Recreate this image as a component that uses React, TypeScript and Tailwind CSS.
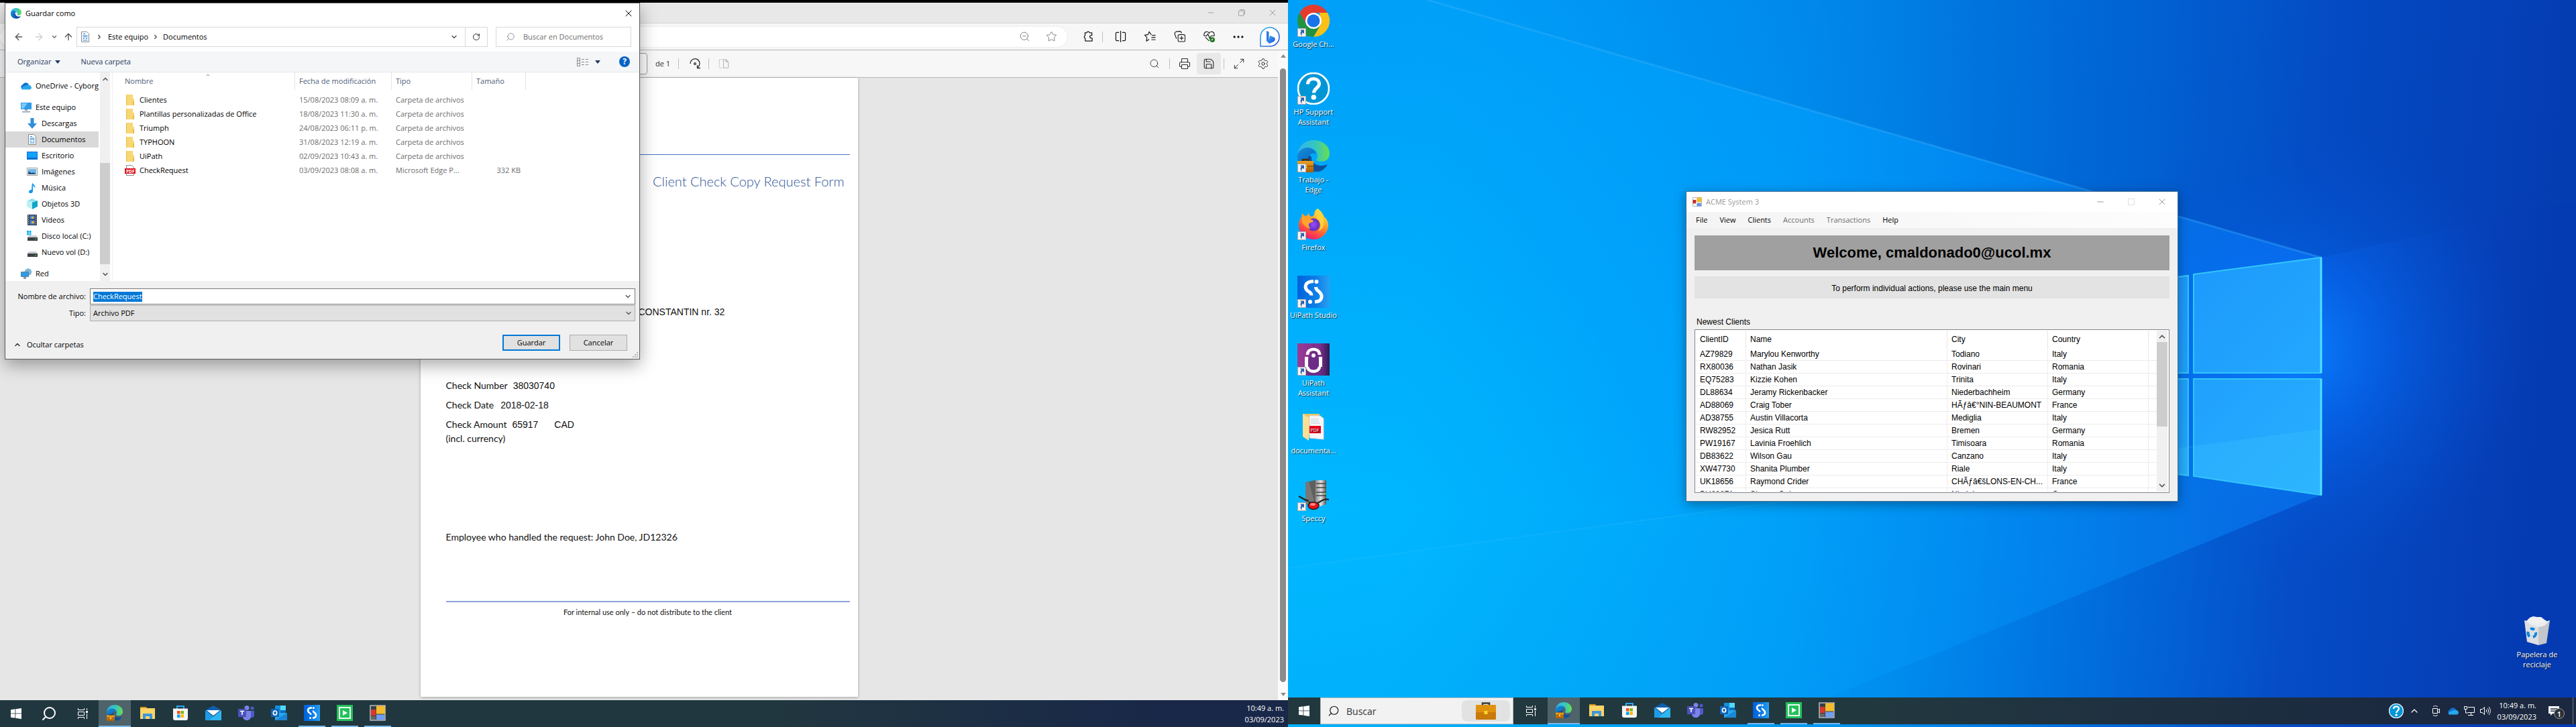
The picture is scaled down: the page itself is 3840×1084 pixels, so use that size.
import React from "react";
import {
  ArrowLeft, ArrowRight, ArrowUp, ChevronDown, ChevronRight, ChevronUp, Columns2, Ellipsis, Maximize2,
  Minus, Printer, RotateCw, Save, Search, Settings, Star, X, ZoomOut,
} from "lucide-react";

type P = { className?: string };
const UI = "font-['Open_Sans','Noto_Sans',sans-serif]";

/* ---------- App icons ---------- */

function EdgeLogo({ className = "", work = false }: P & { work?: boolean }) {
  return (
    <svg viewBox="0 0 48 48" className={className} aria-hidden="true">
      <defs>
        <linearGradient id="eg1" x1="0" y1="0.4" x2="1" y2="0.4">
          <stop offset="0" stopColor="#2fb4ee" /><stop offset="0.55" stopColor="#35c6c0" /><stop offset="1" stopColor="#66e04c" />
        </linearGradient>
        <linearGradient id="eg2" x1="0" y1="0" x2="0.6" y2="1">
          <stop offset="0" stopColor="#1590df" /><stop offset="1" stopColor="#0a5cb0" />
        </linearGradient>
        <linearGradient id="eg3" x1="0" y1="0" x2="0" y2="1">
          <stop offset="0" stopColor="#f2a11b" /><stop offset="1" stopColor="#a65a06" />
        </linearGradient>
      </defs>
      <path fill="#0f4f9c" d="M15 20c-4 10 2 26 15 27 6 0 12-5 15-11-2 1-6 2-10 2-8 0-15-6-14-13z" />
      <path fill="url(#eg2)" d="M0 24c0-9 8-14 15-13 8 1 13 6 12 10-3-3-8-1-10 3-3 7 2 18 11 23C12 49 0 39 0 24z" />
      <path fill="url(#eg1)" d="M0 22C1 9 11 0 24 0c14 0 24 9 24 20 0 8-6 12-12 12-5 0-8-1-8-3 0-1 2-2 2-6 0-6-6-12-14-12C8 11 2 15 0 22z" />
      {work && (
        <g>
          <path d="M8 33v-4h8v4" fill="none" stroke="#4a2c0c" strokeWidth="2.5" />
          <rect x="0" y="31" width="24" height="17" fill="url(#eg3)" />
          <rect x="0" y="38" width="24" height="2" fill="#a05a08" />
          <rect x="10" y="37" width="4" height="5" fill="#ffd23e" />
        </g>
      )}
    </svg>
  );
}

function ChromeLogo({ className = "" }: P) {
  return (
    <svg viewBox="0 0 48 48" className={className} aria-hidden="true">
      <path fill="#e33b2e" d="M3.2 12A24 24 0 0 1 44.8 12H24L14 30z" />
      <path fill="#fbc116" d="M44.8 12A24 24 0 0 1 24 48l10.400-18L33 12z" />
      <path fill="#229342" d="M3.200 12A24 24 0 0 0 24 48l10.400-18H13.600z" />
      <circle cx="24" cy="24" r="12" fill="#fff" />
      <circle cx="24" cy="24" r="9.500" fill="#1a73e8" />
    </svg>
  );
}

function HelpLogo({ className = "" }: P) {
  return (
    <svg viewBox="0 0 48 48" className={className} aria-hidden="true">
      <circle cx="24" cy="24" r="23" fill="#0096d6" stroke="#fff" strokeWidth="2.600" />
      <path d="M15.500 17.500c0-5 3.500-8 8.500-8s8.500 3 8.500 7.500c0 6-8 7-8 13.500" fill="none" stroke="#fff" strokeWidth="5" />
      <circle cx="24.300" cy="37" r="3.800" fill="#fff" />
    </svg>
  );
}

function FirefoxLogo({ className = "" }: P) {
  return (
    <svg viewBox="0 0 48 48" className={className} aria-hidden="true">
      <defs>
        <linearGradient id="ff1" x1="0.8" y1="0" x2="0.3" y2="1">
          <stop offset="0" stopColor="#fff04a" /><stop offset="0.45" stopColor="#ff9a2a" /><stop offset="0.8" stopColor="#ff3f4a" /><stop offset="1" stopColor="#e01586" />
        </linearGradient>
        <radialGradient id="ff2"><stop offset="0" stopColor="#9b4dff" /><stop offset="1" stopColor="#5a2fb8" /></radialGradient>
      </defs>
      <path fill="url(#ff1)" d="M30 1c5 3 9 9 9.500 12 3 2 7 7 6.500 14-1 12-11 20-22 20S1.500 38 2 25c0-4 1-8 4-11l1-6 4 4 4-1 2-4c0 3 1 5 3 6 3 0 4-1 5-3 0-4 2-7 5-9z" />
      <circle cx="24" cy="25" r="9.500" fill="url(#ff2)" />
      <path fill="#ffa52c" d="M7 13c5 0 7 3 10 4 3 0 6 0 7 3-3 2-6 2-7 4-1 3 2 5 2 7-6-1-9-6-12-9z" />
      <path fill="#ffd23a" d="M30 3c5 4 9 11 9 16 2 8-3 14-8 16 6-7 4-14-1-18-3-4-4-9 0-14z" />
    </svg>
  );
}

function StudioLogo({ className = "" }: P) {
  return (
    <svg viewBox="0 0 48 48" className={className} aria-hidden="true">
      <defs><linearGradient id="us" x1="0" x2="1"><stop offset="0" stopColor="#0062dc" /><stop offset="0.6" stopColor="#0f7fe8" /><stop offset="1" stopColor="#27a0f2" /></linearGradient></defs>
      <rect width="48" height="48" fill="url(#us)" />
      <path d="M24 8.500c-13 0-14 9-9 14 3 2 6 3 6 7" fill="none" stroke="#fff" strokeWidth="5" />
      <path d="M26 39c12 0 12-10 6.500-15C30 22 27.500 21 27.500 17" fill="none" stroke="#fff" strokeWidth="5" />
      <circle cx="28.500" cy="9" r="3" fill="#fff" /><circle cx="19" cy="39" r="3" fill="#fff" />
    </svg>
  );
}

function AssistantLogo({ className = "" }: P) {
  return (
    <svg viewBox="0 0 48 48" className={className} aria-hidden="true">
      <defs><linearGradient id="ua" x1="0" x2="1"><stop offset="0" stopColor="#9a3a98" /><stop offset="0.7" stopColor="#7d2f8c" /><stop offset="1" stopColor="#2b1a55" /></linearGradient></defs>
      <rect width="48" height="48" fill="url(#ua)" />
      <path d="M24 0l15 48H10z" fill="#5a2a80" opacity=".6" />
      <path d="M15 17c0-11 18-11 18 0M15 35c1 9 17 9 18 0" fill="none" stroke="#fff" strokeWidth="4.500" />
      <path d="M13.500 20v15M34.500 20v15" stroke="#fff" strokeWidth="5" />
      <circle cx="24" cy="18" r="3" fill="#fff" />
    </svg>
  );
}

function DocsFolderLogo({ className = "" }: P) {
  return (
    <svg viewBox="0 0 48 48" className={className} aria-hidden="true">
      <path fill="#e9c56a" d="M8 4h25v32H8z" /><path fill="#f7f7f7" stroke="#d8d8d8" d="M18 7h16l5 4v31l-21-2z" />
      <path d="M20 12h12M20 15h12M20 18h14" stroke="#b8cbe0" />
      <rect x="18" y="22" width="17" height="11" fill="#e2001a" />
      <text x="19.500" y="30.500" fontSize="7" fill="#fff" fontFamily="Open Sans">PDF</text>
      <path fill="#fbe093" d="M8 4l9 6v34l-9-6z" />
    </svg>
  );
}

function SpeccyLogo({ className = "" }: P) {
  return (
    <svg viewBox="0 0 48 48" className={className} aria-hidden="true">
      <defs><linearGradient id="sp" x1="0" x2="1"><stop offset="0" stopColor="#8a8a8a" /><stop offset="0.5" stopColor="#e4e4e4" /><stop offset="1" stopColor="#555" /></linearGradient></defs>
      <path fill="#777" d="M12 5l15-3v40l-15-5z" /><path fill="#3c3c3c" d="M17 4l10-2v38z" opacity=".4" />
      <path fill="url(#sp)" d="M27 2h16v36l-16 5z" />
      <path d="M28 7h15M28 13h15M28 20h15M28 25h15" stroke="#444" strokeWidth="1.500" /><circle cx="41" cy="22" r="1.300" fill="#4f3" />
      <path d="M2 26c5 2 8 6 15 7M30 36c6-3 10-7 17-5M17 35l6 1" fill="none" stroke="#222" strokeWidth="2.200" />
      <ellipse cx="24" cy="40" rx="8" ry="5.500" fill="#e8121c" stroke="#222" strokeWidth="1.500" />
      <ellipse cx="23" cy="38" rx="4" ry="2" fill="#ff8a86" />
    </svg>
  );
}

function RecycleBin({ className = "" }: P) {
  return (
    <svg viewBox="0 0 48 48" className={className} aria-hidden="true">
      <path fill="#f1f1f1" d="M8 9l5-5 5-2 6 1 6 0 5 4 5 3-12 5-15-2z" />
      <path fill="#dcdfe4" d="M5 8l4 32 17 5V14z" /><path fill="#c3c6cb" d="M26 14l17-6-5 34-12 3z" />
      <path fill="#eceef1" d="M5 8l21 6 17-6-8 8-9 2-12-4z" />
      <path d="M14 21a6 6 0 0 1 6 1M11 25a6 6 0 0 0 2 7M22 26a6 6 0 0 1-4 7" fill="none" stroke="#0a84dc" strokeWidth="4" />
    </svg>
  );
}

function WinLogo({ className = "" }: P) {
  return (
    <svg viewBox="0 0 16 16" className={className} fill="#fff" aria-hidden="true">
      <path d="M0 2.200l6.500-.9v6.200H0zM7.300 1.200L16 0v7.500H7.300zM0 8.300h6.500v6.300L0 13.700zM7.300 8.300H16V16l-8.700-1.200z" />
    </svg>
  );
}

function TaskViewIcon({ className = "" }: P) {
  return (
    <svg viewBox="0 0 16 16" className={className} fill="none" stroke="#fff" aria-hidden="true">
      <path d="M1.500 0v2.500h9V0M1.500 5.500h9v5h-9zM1.500 16v-2.500h9V16M14.500 0v3M14.500 8v8" /><path d="M13.500 4.500h2v2h-2z" fill="#fff" />
    </svg>
  );
}

function ExplorerIcon({ className = "" }: P) {
  return (
    <svg viewBox="0 0 24 24" className={className} aria-hidden="true">
      <path fill="#d99a16" d="M1 3h9l2 3H1z" /><path fill="#fcd468" d="M1 5h22v16H1z" /><path fill="#3f96dc" d="M5 13h14v8h-4v-4H9v4H5z" />
    </svg>
  );
}
function StoreIcon({ className = "" }: P) {
  return (
    <svg viewBox="0 0 24 24" className={className} aria-hidden="true">
      <path d="M7 6V2h10v4" fill="none" stroke="#29a8ea" strokeWidth="2" /><path fill="#f5f5f5" d="M1 5.500h22V20a3 3 0 0 1-3 3H4a3 3 0 0 1-3-3z" />
      <path fill="#f25022" d="M7 9h4.500v4.500H7z" /><path fill="#7fba00" d="M12.500 9H17v4.500h-4.500z" /><path fill="#00a4ef" d="M7 14.500h4.500V19H7z" /><path fill="#ffb900" d="M12.500 14.500H17V19h-4.500z" />
    </svg>
  );
}
function MailIcon({ className = "" }: P) {
  return (
    <svg viewBox="0 0 24 24" className={className} aria-hidden="true">
      <path fill="#0f5fae" d="M0 8l12-7 12 7v6H0z" /><path fill="#fff" d="M2 8h20l-10 8z" /><path fill="#1e9be6" d="M0 8l12 9L24 8v15H0z" /><path fill="#35c0f4" d="M24 8v15H6z" opacity=".7" />
    </svg>
  );
}
function TeamsIcon({ className = "" }: P) {
  return (
    <svg viewBox="0 0 24 24" className={className} aria-hidden="true">
      <circle cx="13" cy="4.500" r="3.500" fill="#7b83eb" /><circle cx="21" cy="5" r="2.500" fill="#5059c9" />
      <path fill="#5059c9" d="M17 9h7v7c0 3-5 4-7 2z" /><path fill="#7b83eb" d="M7 9h12v8c0 8-12 8-12 0z" /><rect y="6" width="12" height="12" fill="#4b53bc" />
      <path d="M3 9.500h6M6 9.500V15" stroke="#fff" strokeWidth="1.600" />
    </svg>
  );
}
function OutlookIcon({ className = "" }: P) {
  return (
    <svg viewBox="0 0 24 24" className={className} aria-hidden="true">
      <rect x="6" y="1" width="16" height="14" fill="#1490df" /><rect x="14" y="1" width="8" height="7" fill="#50d9ff" /><rect x="14" y="8" width="8" height="6" fill="#0f6cbd" />
      <path fill="#28a8ea" d="M6 12h18v11H6z" /><path fill="#1b86d6" d="M6 23l18-11v11z" /><rect y="6" width="12" height="12" fill="#0f64b8" />
      <ellipse cx="6" cy="12" rx="2.600" ry="3" fill="none" stroke="#fff" strokeWidth="1.700" />
    </svg>
  );
}
function RobotRunIcon({ className = "" }: P) {
  return (
    <svg viewBox="0 0 24 24" className={className} aria-hidden="true">
      <rect width="24" height="24" fill="#23c05a" /><rect x="4" y="4" width="16" height="16" fill="none" stroke="#fff" strokeWidth="1.800" /><path fill="#fff" d="M9 8l7 4-7 4z" />
    </svg>
  );
}
function FormsIcon({ className = "" }: P) {
  return (
    <svg viewBox="0 0 24 24" className={className} aria-hidden="true">
      <rect x="1" y="1" width="22" height="22" fill="#34414a" stroke="#b8bcc0" strokeWidth="1.500" />
      <rect x="10" y="1.500" width="13" height="12" fill="#f3bc2e" /><rect x="2" y="7" width="7.500" height="9" fill="#d9372b" /><rect x="10" y="14.500" width="12" height="8" fill="#6f9df0" /><rect x="2" y="17" width="7" height="5" fill="#666" />
    </svg>
  );
}
function WinFormIcon({ className = "" }: P) {
  return (
    <svg viewBox="0 0 24 24" className={className} aria-hidden="true">
      <rect x="1" y="1" width="22" height="22" fill="#fff" stroke="#a8acb0" strokeWidth="1.500" />
      <rect x="11" y="1" width="12" height="12" fill="#f3bc2e" /><rect x="1" y="7" width="8" height="9" fill="#c9281e" /><rect x="11" y="15" width="11" height="8" fill="#5f93ea" />
    </svg>
  );
}
function BriefcaseIcon({ className = "" }: P) {
  return (
    <svg viewBox="0 0 30 26" className={className} aria-hidden="true">
      <path d="M10 5V1.500h10V5" fill="none" stroke="#3d3d3d" strokeWidth="2.600" />
      <rect y="4" width="30" height="22" rx="1.500" fill="#c97a08" /><rect y="4" width="30" height="11" rx="1.500" fill="#e0920f" />
      <rect x="12.500" y="13" width="5" height="5" fill="#ffd52e" />
    </svg>
  );
}

/* ---------- Explorer tree icons ---------- */

function DocIcon({ className = "" }: P) {
  return (
    <svg viewBox="0 0 16 16" className={className} aria-hidden="true">
      <path d="M2.500.5h8l3 3v12h-11z" fill="#fff" stroke="#888" /><path d="M5 3.500h3M4.500 6h7M4.500 8h7M9 10.500h2.500M4.500 13h7M4.500 10.500H7" stroke="#1e7fd0" />
    </svg>
  );
}
function CloudIcon({ className = "" }: P) {
  return (
    <svg viewBox="0 0 16 16" className={className} aria-hidden="true">
      <path fill="#0f6fd0" d="M1 12a4 4 0 0 1 2-6 5 5 0 0 1 9 0z" /><path fill="#28a8ea" d="M2 13.500c-2-1-1-4 1-4 3-2 6-3 9-3 5 1 5 7 1 7z" />
    </svg>
  );
}
const PcIcon = ({ className = "" }: P) => (
  <svg viewBox="0 0 16 16" className={className} aria-hidden="true"><path fill="#2f9be8" d="M0 1h16v10H0z" /><path fill="#7cc8f7" d="M1 2h9L4 10H1z" /><path fill="#8b9aa8" d="M6 11h4v2H6zM2 14h12v1.500H2z" /></svg>
);
const DownIcon = ({ className = "" }: P) => (
  <svg viewBox="0 0 16 16" className={className} aria-hidden="true"><path fill="#2f8fdc" d="M5.500 0h5v8H15l-7 8-7-8h4.500z" /></svg>
);
const DeskIcon = ({ className = "" }: P) => (
  <svg viewBox="0 0 16 16" className={className} aria-hidden="true"><path fill="#0b6fd0" d="M0 2h16v12H0z" /><path fill="#12a0fb" d="M1 3h14v8H1z" /></svg>
);
const PicIcon = ({ className = "" }: P) => (
  <svg viewBox="0 0 16 16" className={className} aria-hidden="true"><path fill="#fff" stroke="#999" d="M.5 2.500h15v11H.5z" /><path fill="#6db8ea" d="M2 4h12v8H2z" /><path fill="#24527a" d="M2 12V7l5 3 3-1 4 3z" /></svg>
);
const MusicIcon = ({ className = "" }: P) => (
  <svg viewBox="0 0 16 16" className={className} aria-hidden="true"><path fill="#1096f0" d="M8 0c1 4 6 4 4 9 0-3-2-3-3-4v8c0 4-6 4-6 1 0-2 2-3 4-3z" /></svg>
);
const CubeIcon = ({ className = "" }: P) => (
  <svg viewBox="0 0 16 16" className={className} aria-hidden="true"><path fill="#8ee4ec" d="M8 0l7 3-7 3-7-3z" /><path fill="#bdf0f2" d="M0 3l8 3v10l-8-4z" /><path fill="#12a5c8" d="M16 3L8 6v10l8-4z" /></svg>
);
const FilmIcon = ({ className = "" }: P) => (
  <svg viewBox="0 0 16 16" className={className} aria-hidden="true"><path fill="#333" d="M1 0h14v16H1z" /><path fill="#3b78d8" d="M4 1h8v6H4zM4 8h8v7H4z" /><path fill="#e2b52c" d="M7 3h3v3H7zM7 10h4v3H7z" /><path d="M2.500 1v14M13.500 1v14" stroke="#fff" strokeDasharray="1.500 1.500" /></svg>
);
const DiskIcon = ({ className = "", win = false }: P & { win?: boolean }) => (
  <svg viewBox="0 0 16 16" className={className} aria-hidden="true">
    {win && <path fill="#18b4ee" d="M0 0h3v3H0zM3.500 0h3v3h-3zM0 3.500h3v3H0zM3.500 3.500h3v3h-3z" />}
    <path fill="#c9ccd0" d="M3 7h11l2 3H1z" /><path fill="#3e4246" d="M1 10h15v5H1z" /><path fill="#2fe04c" d="M12 12h2v1h-2z" />
  </svg>
);
const NetIcon = ({ className = "" }: P) => (
  <svg viewBox="0 0 16 16" className={className} aria-hidden="true"><circle cx="11" cy="5.500" r="5.200" fill="#7db8d8" /><path fill="#2f9be8" stroke="#5c7f98" d="M.5 5.500h11v7H.5z" /><path fill="#8b9aa8" d="M4 13h4v3H4z" /></svg>
);
const FolderIcon = ({ className = "" }: P) => (
  <svg viewBox="0 0 16 16" className={className} aria-hidden="true"><path fill="#f8d775" d="M2 0h10v6h2v10H2z" /><path fill="#e8bc45" d="M2 0h1v16H2zM12 10h2v6h-2z" /></svg>
);
const PdfIcon = ({ className = "" }: P) => (
  <svg viewBox="0 0 16 16" className={className} aria-hidden="true"><path fill="#fff" stroke="#888" d="M2.500.5h8l3 3v12h-11z" /><path fill="#dc1420" d="M0 5h16v8H0z" /><text x="2" y="11.500" fontSize="6.500" fontWeight="700" fill="#fff" fontFamily="Open Sans">PDF</text></svg>
);

/* ---------- Save dialog ---------- */

const tree: { name: string; icon: (p: P) => React.ReactElement; level: number; gap?: boolean; active?: boolean }[] = [
  { name: "OneDrive - Cyborg", icon: CloudIcon, level: 1 },
  { name: "Este equipo", icon: PcIcon, level: 1, gap: true },
  { name: "Descargas", icon: DownIcon, level: 2 },
  { name: "Documentos", icon: DocIcon, level: 2, active: true },
  { name: "Escritorio", icon: DeskIcon, level: 2 },
  { name: "Imágenes", icon: PicIcon, level: 2 },
  { name: "Música", icon: MusicIcon, level: 2 },
  { name: "Objetos 3D", icon: CubeIcon, level: 2 },
  { name: "Videos", icon: FilmIcon, level: 2 },
  { name: "Disco local (C:)", icon: (p) => <DiskIcon {...p} win />, level: 2 },
  { name: "Nuevo vol (D:)", icon: (p) => <DiskIcon {...p} />, level: 2 },
  { name: "Red", icon: NetIcon, level: 1, gap: true },
];

const files = [
  ["Clientes", "15/08/2023 08:09 a. m.", "Carpeta de archivos", ""],
  ["Plantillas personalizadas de Office", "18/08/2023 11:30 a. m.", "Carpeta de archivos", ""],
  ["Triumph", "24/08/2023 06:11 p. m.", "Carpeta de archivos", ""],
  ["TYPHOON", "31/08/2023 12:19 a. m.", "Carpeta de archivos", ""],
  ["UiPath", "02/09/2023 10:43 a. m.", "Carpeta de archivos", ""],
  ["CheckRequest", "03/09/2023 08:08 a. m.", "Microsoft Edge P...", "332 KB"],
];

function SaveDialog() {
  return (
    <section aria-label="Guardar como" className={`absolute left-[7px] top-1 z-10 flex w-[947px] flex-col border border-[#5a5a5a] bg-white text-[11px] leading-4 text-black shadow-[0_8px_24px_rgba(0,0,0,0.35)] ${UI}`}>
      <header className="flex h-[30px] items-center pl-2 pr-2">
        <EdgeLogo className="size-4" />
        <h1 className="ml-1.5 text-[11px]">Guardar como</h1>
        <button type="button" aria-label="Cerrar" className="ml-auto grid size-4 place-items-center"><X className="size-4" strokeWidth={1.500} /></button>
      </header>

      <div className="mb-0.5 flex h-10 items-center pl-3 pr-3">
        <button type="button" aria-label="Atrás"><ArrowLeft className="size-4 text-[#555]" strokeWidth={2} /></button>
        <button type="button" aria-label="Adelante" className="ml-3.5"><ArrowRight className="size-4 text-[#d0d0d0]" strokeWidth={2} /></button>
        <button type="button" aria-label="Recientes" className="ml-2.5"><ChevronDown className="size-2.5 text-[#777]" strokeWidth={4} /></button>
        <button type="button" aria-label="Subir" className="ml-2"><ArrowUp className="size-4 text-[#555]" strokeWidth={2} /></button>
        <nav aria-label="Ruta" className="ml-1 flex h-[30px] flex-1 items-center border border-[#d9d9d9] pl-1">
          <DocIcon className="size-4" />
          <ChevronRight className="mx-2 size-2.5 text-[#444]" strokeWidth={3} />
          <a href="#equipo">Este equipo</a>
          <ChevronRight className="mx-1.5 size-2.5 text-[#444]" strokeWidth={3} />
          <a href="#documentos">Documentos</a>
          <button type="button" aria-label="Ubicaciones" className="ml-auto grid w-8 place-items-center"><ChevronDown className="size-3 text-[#555]" strokeWidth={3} /></button>
          <button type="button" aria-label="Actualizar" className="grid h-full w-[33px] place-items-center border-l border-[#d9d9d9]"><RotateCw className="size-3 text-[#555]" strokeWidth={2.500} /></button>
        </nav>
        <label className="ml-3 flex h-[30px] w-[202px] items-center border border-[#d9d9d9] pl-3.5">
          <Search className="size-3.5 -scale-x-100 text-[#8a7f8f]" strokeWidth={1.500} />
          <input aria-label="Buscar" placeholder="Buscar en Documentos" className="ml-3 w-40 bg-transparent outline-none placeholder:text-[#6d6d6d]" />
        </label>
      </div>

      <div className="flex h-[31px] items-center border-b border-[#e5e5e5] bg-[#f4f6f8] pl-[18px] pr-3.5 text-[#1e395b]">
        <button type="button" className="flex items-center gap-1.5">Organizar <span className="border-x-4 border-t-[5px] border-x-transparent border-t-[#1e395b]" /></button>
        <button type="button" className="ml-[30px]">Nueva carpeta</button>
        <button type="button" aria-label="Vista" className="ml-auto flex items-center gap-2.5">
          <svg viewBox="0 0 17 13" className="h-[13px] w-[17px]" fill="none" stroke="#8a8a8a" aria-hidden="true"><path d="M.5.500h4v12h-4zM.5 4.500h4M.5 8.500h4M7 2.500h4M13 2.500h4M7 6.500h4M13 6.500h4M7 10.500h4M13 10.500h4" /></svg>
          <span className="border-x-4 border-t-[5px] border-x-transparent border-t-[#1e395b]" />
        </button>
        <button type="button" aria-label="Ayuda" className="ml-7 grid size-4 place-items-center rounded-full bg-[#0a63c4] text-xs font-bold text-white">?</button>
      </div>

      <div className="flex h-[311px]">
        <ul className="flex w-[139px] flex-col overflow-hidden pt-2">
          {tree.map(({ name, icon: Icon, level, gap, active }) => (
            <li key={name} className={gap ? "mt-2" : ""}>
              <a href="#arbol" className={`flex h-6 items-center gap-1.5 whitespace-nowrap ${level === 1 ? "pl-[23px]" : "pl-8"} ${active ? "bg-[#d9d9d9]" : ""}`}>
                <Icon className="size-4 shrink-0" />{name}
              </a>
            </li>
          ))}
        </ul>
        <div className="ml-0.5 flex w-[15px] flex-col items-center bg-[#f0f0f0] py-1">
          <ChevronUp className="size-3 text-[#555]" strokeWidth={3} />
          <div className="mt-[119px] h-[151px] w-full bg-[#cdcdcd]" />
          <ChevronDown className="mt-auto size-3 text-[#555]" strokeWidth={3} />
        </div>
        <div className="relative ml-[3px] flex-1 border-l border-[#f0f0f0] pl-2">
          <ChevronUp className="absolute left-[138px] top-0 size-2 text-[#888]" strokeWidth={3} />
          <table className="table-fixed border-separate border-spacing-0 text-left text-[#6d6d6d]">
            <colgroup><col className="w-[264px]" /><col className="w-36" /><col className="w-30" /><col className="w-20" /></colgroup>
            <thead>
              <tr className="h-[26px] text-[#4c607a]">
                {["Nombre", "Fecha de modificación", "Tipo", "Tamaño"].map((h, i) => (
                  <th key={h} className={`border-r border-[#e5e5e5] font-normal ${i === 0 ? "pl-2.5" : "pl-1.5"}`}>{h}</th>
                ))}
              </tr>
            </thead>
            <tbody>
              <tr className="h-1"><td colSpan={4} /></tr>
              {files.map(([name, date, type, size], i) => (
                <tr key={name} className="h-[21px] whitespace-nowrap">
                  <td className="pl-2.5 text-black">
                    <span className="flex items-center gap-1.5">{i === 5 ? <PdfIcon className="size-4" /> : <FolderIcon className="size-4" />}{name}</span>
                  </td>
                  <td className="pl-1.5">{date}</td>
                  <td className="pl-1.5">{type}</td>
                  <td className="pr-2 text-right">{size}</td>
                </tr>
              ))}
            </tbody>
          </table>
        </div>
      </div>

      <div className="bg-[#f0f0f0] pb-3 pl-2 pr-1.5 pt-[11px]">
        <div className="grid grid-cols-[112px_1fr] items-center gap-x-1.5 gap-y-px">
          <label htmlFor="fname" className="text-right">Nombre de archivo:</label>
          <div className="flex h-6 items-center justify-between border border-[#7a7a7a] bg-white px-1">
            <input id="fname" defaultValue="CheckRequest" className="field-sizing-content h-[15px] bg-[#0078d7] text-white outline-none" />
            <ChevronDown className="size-3 text-[#555]" strokeWidth={2.500} />
          </div>
          <label htmlFor="ftype" className="text-right">Tipo:</label>
          <div className="relative">
            <select id="ftype" className="h-6 w-full appearance-none border border-[#adadad] bg-[#e1e1e1] px-1"><option>Archivo PDF</option></select>
            <ChevronDown className="pointer-events-none absolute right-1 top-1.5 size-3 text-[#555]" strokeWidth={2.500} />
          </div>
        </div>
        <div className="mt-5 flex items-center pr-3">
          <button type="button" className="mt-1.5 flex items-center gap-2 pl-1"><ChevronUp className="size-3 text-[#333]" strokeWidth={3} />Ocultar carpetas</button>
          <button type="submit" className="ml-auto h-6 w-[86px] border-2 border-[#0078d7] bg-[#e1e1e1] leading-4">Guardar</button>
          <button type="button" className="ml-3.5 h-6 w-[86px] border border-[#adadad] bg-[#e1e1e1]">Cancelar</button>
        </div>
      </div>
      <svg viewBox="0 0 8 8" className="absolute bottom-0.5 right-0.5 size-2" fill="#bbb" aria-hidden="true"><path d="M6 0h2v2H6zM3 3h2v2H3zM6 3h2v2H6zM0 6h2v2H0zM3 6h2v2H3zM6 6h2v2H6z" /></svg>
    </section>
  );
}

/* ---------- Browser ---------- */

function Cell({ label, className = "w-9", children }: { label: string; className?: string; children: React.ReactNode }) {
  return <button type="button" aria-label={label} className={`grid h-8 shrink-0 place-items-center ${className}`}>{children}</button>;
}
const Rule = ({ className = "" }: P) => <span className={`h-4 w-px shrink-0 bg-[#c0c0c0] ${className}`} />;

function BingIcon() {
  return (
    <svg viewBox="0 0 30 30" className="size-[30px]" aria-hidden="true">
      <defs><linearGradient id="bg" x1="0" y1="0" x2="1" y2="1"><stop offset="0" stopColor="#2fb6f0" /><stop offset="1" stopColor="#2f4fd8" /></linearGradient></defs>
      <path d="M1 29V15A14 14 0 1 1 15 29z" fill="#fff" stroke="url(#bg)" strokeWidth="1.600" />
      <path d="M10 6l3.500 1.500V19L10 22z" fill="#2a78e8" /><path d="M10 21l4-3 1-5 7 3c2 3 0 6-3 7l-5 2z" fill="url(#bg)" />
    </svg>
  );
}

function Browser() {
  return (
    <div className={`flex min-h-0 flex-1 flex-col text-[11px] ${UI}`}>
      <header className="flex h-[31px] shrink-0 items-center justify-end border-b border-[#d4d4d4] bg-[#e8e8e8] text-[#888]">
        <Cell label="Minimizar" className="w-[46px]"><Minus className="size-3" strokeWidth={1.500} /></Cell>
        <Cell label="Restaurar" className="w-[46px]">
          <svg viewBox="0 0 12 12" className="size-2.5" fill="none" stroke="currentColor" aria-hidden="true"><rect x=".5" y="2.500" width="9" height="9" rx="1.500" /><path d="M3 .5h6a2.500 2.500 0 0 1 2.500 2.500v6" /></svg>
        </Cell>
        <Cell label="Cerrar" className="w-[46px]"><X className="size-4" strokeWidth={1.200} /></Cell>
      </header>
      <div className="flex h-10 shrink-0 items-center border-b border-[#b8b8b8] bg-[#f7f7f7] pr-0.5 text-[#1a1a1a]">
        <div className="mr-2 flex h-[30px] flex-1 items-center justify-end rounded-full bg-white pr-1 text-[#777] shadow-[0_0_2px_rgba(0,0,0,0.12)]">
          <input aria-label="Dirección" className="min-w-0 flex-1 bg-transparent outline-none" />
          <Cell label="Alejar" className="w-10"><ZoomOut className="size-[17px]" strokeWidth={1.300} /></Cell>
          <Cell label="Favorito" className="w-10"><Star className="size-[17px]" strokeWidth={1.300} /></Cell>
        </div>
        <Cell label="Extensiones" className="w-11">
          <svg viewBox="0 0 18 18" className="size-[17px]" fill="none" stroke="currentColor" strokeWidth="1.300" strokeLinejoin="round" aria-hidden="true">
            <path d="M4.500 3h3a2.200 2.200 0 0 1 4.300 0h3.700v4h-1a2.200 2.200 0 0 0 0 4.400h1.500V16h-11v-4.400a2.300 2.300 0 0 1 0-4.400z" />
          </svg>
        </Cell>
        <Rule className="mr-1" />
        <Cell label="Pantalla dividida" className="w-11">
          <svg viewBox="0 0 18 18" className="size-[17px]" fill="none" stroke="currentColor" strokeWidth="1.300" aria-hidden="true"><path d="M6.500 2.500H3a1.500 1.500 0 0 0-1.500 1.500v10A1.500 1.500 0 0 0 3 15.500h3.500M11.500 2.500H15a1.500 1.500 0 0 1 1.500 1.500v10a1.500 1.500 0 0 1-1.500 1.500h-3.500M9 0v18" /></svg>
        </Cell>
        <Cell label="Favoritos" className="w-11">
          <svg viewBox="0 0 18 18" className="size-[17px]" fill="none" stroke="currentColor" strokeWidth="1.200" aria-hidden="true"><path d="M11 6.500L7.500 1.500 5.500 6l-5 .7L4 10.500 3.200 16l4.300-2.500M12 7h5.500M11 10.500h6.500M11 14h6.500" /></svg>
        </Cell>
        <Cell label="Colecciones" className="w-11">
          <svg viewBox="0 0 18 18" className="size-[17px]" fill="none" stroke="currentColor" strokeWidth="1.200" aria-hidden="true"><rect x="6.500" y="6" width="11" height="11" rx="2" /><path d="M12 8.500v6M9 11.500h6M4 12.500L1 4.500c0-2 1-2.500 2-3L9 .7c2 0 2.500 1 3 3" /></svg>
        </Cell>
        <Cell label="Rendimiento" className="w-11">
          <svg viewBox="0 0 18 18" className="size-[17px]" fill="none" stroke="currentColor" strokeWidth="1.200" aria-hidden="true"><path d="M1 8c-1-8 7-8 8-4 1-4 9-4 8 4M1 8h4l2-3 3 7 2-4h5M3 10l6 6" /><circle cx="14" cy="14" r="4" fill="#1d7a1d" stroke="none" /><path d="M12.500 15l2.500-2.500" stroke="#fff" /></svg>
        </Cell>
        <Cell label="Más" className="w-11"><Ellipsis className="size-5" strokeWidth={2} /></Cell>
        <Cell label="Bing" className="w-[50px]"><BingIcon /></Cell>
      </div>
      <div className="flex min-h-0 flex-1">
        <div className="flex min-w-0 flex-1 flex-col">
          <div className="flex h-[41px] shrink-0 items-center justify-between border-b border-[#b8b8b8] bg-[#f7f7f7] pr-1 text-[#2a2a2a]">
            <div className="flex items-center pl-[905px]">
              <input aria-label="Página" className="h-8 w-[60px] rounded-sm border border-[#9a9a9a] bg-white" />
              <span className="ml-3 mr-3">de 1</span>
              <Rule />
              <Cell label="Girar" className="ml-1.5 w-9">
                <svg viewBox="0 0 18 18" className="size-[18px]" fill="none" stroke="currentColor" strokeWidth="1.300" aria-hidden="true"><path d="M2 9a7 7 0 1 1 10 6M12.500 11v4.500H17" /><circle cx="9" cy="9" r="1.300" /></svg>
              </Cell>
              <Rule className="ml-0.5" />
              <Cell label="Vista de página" className="ml-1 w-9">
                <svg viewBox="0 0 18 16" className="size-4" fill="none" stroke="#b5b5b5" strokeWidth="1.200" aria-hidden="true"><path d="M8.500 1h4l4 4v10h-8zM12.500 1v4h4" /><path d="M7 1H1.500v14H7" strokeDasharray="2 1.500" /></svg>
              </Cell>
            </div>
            <div className="flex items-center">
              <Cell label="Buscar"><Search className="size-4" strokeWidth={1.300} /></Cell>
              <Rule className="mx-1" />
              <Cell label="Imprimir"><Printer className="size-[18px]" strokeWidth={1.400} /></Cell>
              <Cell label="Guardar" className="w-9 rounded-sm bg-[#e8e8e8]"><Save className="size-[18px]" strokeWidth={1.500} /></Cell>
              <Rule className="mx-1" />
              <Cell label="Pantalla completa"><Maximize2 className="size-[18px]" strokeWidth={1.300} /></Cell>
              <Cell label="Configuración"><Settings className="size-[18px]" strokeWidth={1.300} /></Cell>
            </div>
          </div>
          <main className="flex min-h-0 flex-1 justify-center bg-[#e6e6e6] pb-[5px]">
            <Page />
          </main>
        </div>
        <div className="flex w-[15px] shrink-0 flex-col items-center bg-[#fafafa] py-1.5">
          <span className="border-x-4 border-b-[5px] border-x-transparent border-b-[#8b8b8b]" />
          <span className="my-4 w-[9px] flex-1 rounded-full bg-[#8b8b8b]" />
          <span className="border-x-4 border-t-[5px] border-x-transparent border-t-[#8b8b8b]" />
        </div>
      </div>
    </div>
  );
}

function Field({ label, children }: { label: string; children: React.ReactNode }) {
  return <div className="flex h-[29px] items-center"><dt>{label}</dt><dd className="flex font-['Liberation_Sans',Arial,sans-serif] text-sm">{children}</dd></div>;
}

function Page() {
  return (
    <article className="flex w-[652px] flex-col bg-white pl-[38px] pr-3 font-[Lato,sans-serif] text-[14px] leading-[22px] text-[#111] shadow-[0_1px_4px_rgba(0,0,0,0.3)]">
      <div className="mt-[114px] border-t border-[#4472c4]" />
      <h2 className="mt-[25px] pr-2 text-right text-[20px] font-light leading-7 text-[#2f5496]">Client Check Copy Request Form</h2>
      <p className="mt-[170px] pl-[287px] font-['Liberation_Sans',Arial,sans-serif] text-sm leading-[22px]">CONSTANTIN nr. 32</p>
      <dl className="mt-[84px]">
        <Field label="Check Number"><span className="ml-2">38030740</span></Field>
        <Field label="Check Date"><span className="ml-2.5">2018-02-18</span></Field>
        <Field label="Check Amount"><span className="ml-2">65917</span><span className="ml-6">CAD</span></Field>
      </dl>
      <p className="-mt-1">(incl. currency)</p>
      <p className="mt-[125px]">Employee who handled the request: John Doe, JD12326</p>
      <footer className="mt-[84px] border-t-2 border-[#8ea2dc] pt-1 text-center text-[11px]">For internal use only – do not distribute to the client</footer>
    </article>
  );
}

/* ---------- Taskbar ---------- */

const apps: { name: string; icon: (p: P) => React.ReactElement; open?: boolean; active?: boolean }[] = [
  { name: "Edge", icon: (p) => <EdgeLogo {...p} work />, active: true },
  { name: "Explorador", icon: ExplorerIcon },
  { name: "Microsoft Store", icon: StoreIcon },
  { name: "Correo", icon: MailIcon },
  { name: "Teams", icon: TeamsIcon },
  { name: "Outlook", icon: OutlookIcon },
  { name: "UiPath Studio", icon: StudioLogo, open: true },
  { name: "UiPath Robot", icon: RobotRunIcon, open: true },
  { name: "ACME System 3", icon: FormsIcon, open: true },
];

function AppButtons() {
  return (
    <div className="flex h-full gap-px">
      {apps.map(({ name, icon: Icon, open, active }) => (
        <button key={name} type="button" aria-label={name} className={`flex h-full w-12 flex-col items-center ${active ? "bg-[#4f636b]" : ""}`}>
          <span className="grid flex-1 place-items-center"><Icon className="size-6" /></span>
          <span className={`h-0.5 ${active ? "w-full bg-[#76b9ed]" : open ? "w-10 bg-[#76b9ed]" : ""}`} />
        </button>
      ))}
    </div>
  );
}

function Clock() {
  return <time className={`flex flex-col text-right text-[11px] leading-[17px] text-white ${UI}`}><span>10:49 a. m.</span><span>03/09/2023</span></time>;
}

/* ---------- Desktop ---------- */

function Wallpaper() {
  return (
    <svg viewBox="0 0 1920 1084" preserveAspectRatio="none" className="absolute inset-0 size-full" aria-hidden="true">
      <defs>
        <linearGradient id="w0" x1="0" y1="0" x2="0" y2="1"><stop offset="0" stopColor="#009ff8" /><stop offset="0.700" stopColor="#00b8ff" /><stop offset="1" stopColor="#00affa" /></linearGradient>
        <linearGradient id="w1" x1="0" y1="0" x2="1" y2="0.050">
          <stop offset="0.120" stopColor="#0090f4" stopOpacity="0" /><stop offset="0.400" stopColor="#008cf0" stopOpacity="0.500" />
          <stop offset="0.620" stopColor="#0070e0" stopOpacity="0.900" /><stop offset="0.820" stopColor="#054cc6" /><stop offset="1" stopColor="#053bb2" />
        </linearGradient>
        <linearGradient id="w2" x1="0" y1="0" x2="1" y2="0"><stop offset="0" stopColor="#0060d0" stopOpacity="0" /><stop offset="0.500" stopColor="#0048b8" stopOpacity="0.350" /><stop offset="1" stopColor="#0340b4" stopOpacity="0.300" /></linearGradient>
        <linearGradient id="w3" x1="0" y1="0" x2="1" y2="0"><stop offset="0" stopColor="#00a8ff" stopOpacity="0" /><stop offset="0.500" stopColor="#0098ff" stopOpacity="0.500" /><stop offset="1" stopColor="#0a7cff" stopOpacity="0.850" /></linearGradient>
        <radialGradient id="w4"><stop offset="0" stopColor="#0a80ff" stopOpacity="0.950" /><stop offset="0.400" stopColor="#0668f0" stopOpacity="0.600" /><stop offset="1" stopColor="#0550d0" stopOpacity="0" /></radialGradient>
        <linearGradient id="w5" x1="0" y1="0" x2="1" y2="1"><stop offset="0" stopColor="#1a92fb" /><stop offset="1" stopColor="#27b0ff" /></linearGradient>
      </defs>
      <rect width="1920" height="1084" fill="url(#w0)" />
      <rect width="1920" height="1084" fill="url(#w1)" />
      <ellipse cx="1510" cy="520" rx="330" ry="340" fill="url(#w4)" />
      <path d="M208 0L1540 384V738L700 1084H0V0z" fill="url(#w3)" opacity=".5" />
      <path d="M208 0L1540 384 1920 300V0z" fill="url(#w2)" opacity=".8" />
      <path d="M208 0L1540 384" stroke="#3fb4ff" strokeWidth="3" opacity=".35" />
      <path d="M0 847L1540 640V738L700 1084H0z" fill="#10c0ff" opacity=".07" />
      <path d="M0 847L1540 640" stroke="#3fc4ff" strokeWidth="2" opacity=".2" />
      <g fill="url(#w5)" stroke="#31c6fb" strokeWidth="2">
        <path d="M1190 430L1342 411V556H1190zM1350 409L1540 384V556H1350zM1190 565H1342V709L1190 690zM1350 565H1540V738L1350 710z" />
      </g>
      <path d="M1190 690L1342 666V709L1190 690zM1350 665L1540 640V738L1350 710z" fill="#40c8ff" opacity=".25" />
      <path d="M1540 384V556M1540 565V738" stroke="#4fe0ff" strokeWidth="3" />
    </svg>
  );
}

const shortcuts = [
  { lines: ["Google Ch..."], icon: ChromeLogo, link: true },
  { lines: ["HP Support", "Assistant"], icon: HelpLogo, link: true },
  { lines: ["Trabajo -", "Edge"], icon: (p: P) => <EdgeLogo {...p} work />, link: true },
  { lines: ["Firefox"], icon: FirefoxLogo, link: true },
  { lines: ["UiPath Studio"], icon: StudioLogo, link: true },
  { lines: ["UiPath", "Assistant"], icon: AssistantLogo, link: true },
  { lines: ["documenta..."], icon: DocsFolderLogo, link: false },
  { lines: ["Speccy"], icon: SpeccyLogo, link: true },
];

function Shortcut({ lines, icon: Icon, link }: { lines: string[]; icon: (p: P) => React.ReactElement; link: boolean }) {
  return (
    <a href="#abrir" className={`flex h-[101px] w-[76px] flex-col items-center whitespace-nowrap text-center text-[11px] leading-[15px] text-white [text-shadow:1px_1px_1px_rgba(0,0,0,0.8)] ${UI}`}>
      <span className="relative mb-[3px]">
        <Icon className="size-12" />
        {link && (
          <svg viewBox="0 0 13 13" className="absolute bottom-0 left-0 size-[13px]" aria-hidden="true"><path fill="#f4f4f4" stroke="#aaa" d="M.5.500h12v12H.5z" /><path fill="#2a5fa8" d="M4 2.500h6v6L8 6.500c-2 1-2 3-1 5-3-2-3-5-1-7z" /></svg>
        )}
      </span>
      {lines.map((line) => <span key={line}>{line}</span>)}
    </a>
  );
}

const clients = [
  ["AZ79829", "Marylou Kenworthy", "Todiano", "Italy"],
  ["RX80036", "Nathan Jasik", "Rovinari", "Romania"],
  ["EQ75283", "Kizzie Kohen", "Trinita", "Italy"],
  ["DL88634", "Jeramy Rickenbacker", "Niederbachheim", "Germany"],
  ["AD88069", "Craig Tober", "HÃƒâ€°NIN-BEAUMONT", "France"],
  ["AD38755", "Austin Villacorta", "Mediglia", "Italy"],
  ["RW82952", "Jesica Rutt", "Bremen", "Germany"],
  ["PW19167", "Lavinia Froehlich", "Timisoara", "Romania"],
  ["DB83622", "Wilson Gau", "Canzano", "Italy"],
  ["XW47730", "Shanita Plumber", "Riale", "Italy"],
  ["UK18656", "Raymond Crider", "CHÃƒâ€šLONS-EN-CH...", "France"],
  ["PH68871", "Sharon Galo", "Niedeln", "Germany"],
];

function AcmeWindow() {
  return (
    <section aria-label="ACME System 3" className="absolute left-[593px] top-[285px] flex w-[734px] flex-col border border-[#3f6f96] bg-[#f0f0f0] font-['Liberation_Sans',Arial,sans-serif] text-[11px] leading-4 text-black shadow-[0_4px_16px_rgba(0,0,0,0.35)]">
      <header className={`flex h-[30px] items-center bg-white pl-[9px] text-[#999] ${UI}`}>
        <WinFormIcon className="size-3.5" />
        <h1 className="ml-1.5 flex-1">ACME System 3</h1>
        <Cell label="Minimizar" className="w-[46px]"><Minus className="size-3.5" strokeWidth={2} /></Cell>
        <Cell label="Maximizar" className="w-[46px]"><span className="size-2.5 border border-[#e0e0e0]" /></Cell>
        <Cell label="Cerrar" className="w-[46px]"><X className="size-4" strokeWidth={1.500} /></Cell>
      </header>
      <nav className={`flex h-6 items-center gap-[18px] bg-gradient-to-r from-[#f4f4f4] to-[#fdfdfd] pl-3.5 ${UI}`}>
        {["File", "View", "Clients", "Accounts", "Transactions", "Help"].map((m) => (
          <button key={m} type="button" className={m === "Accounts" || m === "Transactions" ? "text-[#6d6d6d]" : ""}>{m}</button>
        ))}
      </nav>
      <div className="flex flex-col px-3 pb-3">
        <h2 className="mt-[11px] grid h-[52px] place-items-center bg-[#a0a0a0] text-[22px] font-bold">Welcome, cmaldonado0@ucol.mx</h2>
        <p className="mt-[9px] grid h-[33px] place-items-center bg-[#e3e3e3] pt-0.5 text-[12px]">To perform individual actions, please use the main menu</p>
        <h3 className="mt-[27px] pl-[3px] text-[12px]">Newest Clients</h3>
        <div className="mt-[3px] flex h-[244px] border border-[#828790] bg-white p-px">
          <div className="min-w-0 flex-1 overflow-hidden">
            <table className="w-full table-fixed border-separate border-spacing-0 text-left text-[12px] leading-4">
              <colgroup><col className="w-[75px]" /><col className="w-[300px]" /><col className="w-[150px]" /><col className="w-[150px]" /><col /></colgroup>
              <thead>
                <tr className="h-[26px]">
                  {["ClientID", "Name", "City", "Country"].map((h) => <th key={h} className="border-r border-[#e5e5e5] pl-1.5 font-normal">{h}</th>)}
                  <th aria-label="Vacía" />
                </tr>
              </thead>
              <tbody>
                {clients.map((row) => (
                  <tr key={row[0]} className="h-[19px]">
                    {row.map((v) => <td key={v} className="whitespace-nowrap border-b border-r border-[#ececec] pl-1.5">{v}</td>)}
                    <td className="border-b border-[#ececec]" />
                  </tr>
                ))}
              </tbody>
            </table>
          </div>
          <div className="mr-px flex w-4 flex-col items-center bg-[#f0f0f0] py-0.5">
            <ChevronUp className="size-3.5 text-[#555]" strokeWidth={3} />
            <div className="mt-px h-[126px] w-full bg-[#cdcdcd]" />
            <ChevronDown className="mt-auto size-3.5 text-[#555]" strokeWidth={3} />
          </div>
        </div>
      </div>
    </section>
  );
}

export default function App() {
  return (
    <div className="flex h-screen w-full overflow-hidden bg-black">
      <div className="relative flex min-w-0 flex-1 flex-col pt-1">
        <Browser />
        <SaveDialog />
        <footer className="flex h-10 shrink-0 items-center bg-gradient-to-r from-[#21373f] from-60% to-[#192748] to-90%">
          <button type="button" aria-label="Inicio" className="grid w-12 place-items-center"><WinLogo className="size-4" /></button>
          <button type="button" aria-label="Buscar" className="grid w-[50px] place-items-center"><Search className="size-6 -scale-x-100 text-white" strokeWidth={2} /></button>
          <button type="button" aria-label="Vista de tareas" className="grid w-[49px] place-items-center"><TaskViewIcon className="size-4" /></button>
          <AppButtons />
          <div className="ml-auto pr-1.5"><Clock /></div>
        </footer>
      </div>

      <div className="relative flex min-w-0 flex-1 flex-col pb-1">
        <Wallpaper />
        <main className="relative flex flex-1 justify-between">
          <div className="flex flex-col pt-[7px]">
            {shortcuts.map((s) => <Shortcut key={s.lines.join(" ")} {...s} />)}
          </div>
          <AcmeWindow />
          <div className="flex flex-col justify-end pb-[22px] pr-5">
            <Shortcut lines={["Papelera de", "reciclaje"]} icon={RecycleBin} link={false} />
          </div>
        </main>
        <footer className="relative flex h-10 shrink-0 items-center bg-gradient-to-r from-[#22383f] from-45% to-[#1b2840] to-90%">
          <button type="button" aria-label="Inicio" className="grid w-12 place-items-center"><WinLogo className="size-4" /></button>
          <label className="flex h-10 w-[288px] items-center border border-[#b8bcbe] bg-[#f2f2f2] pl-2.5 pr-1">
            <Search className="size-[18px] -scale-x-100 text-[#222]" strokeWidth={1.600} />
            <input aria-label="Buscar" placeholder="Buscar" className={`ml-2.5 min-w-0 flex-1 bg-transparent text-[14px] outline-none placeholder:text-[#333] ${UI}`} />
            <span className="grid h-8 w-[72px] place-items-center rounded-lg bg-[#e2e2e2]"><BriefcaseIcon className="h-[26px] w-[30px]" /></span>
          </label>
          <button type="button" aria-label="Vista de tareas" className="grid w-[51px] place-items-center"><TaskViewIcon className="size-4" /></button>
          <AppButtons />
          <div className="ml-auto flex h-full items-center text-white">
            <HelpLogo className="size-[22px]" />
            <ChevronUp className="ml-2 size-4" strokeWidth={1.800} />
            <svg viewBox="0 0 16 16" className="ml-4 size-4" fill="none" stroke="#fff" aria-hidden="true"><path d="M3.500 4.500h7v7h-7zM10.500 7l3-2v6l-3-2M4 2c2-2 5-2 7 0M4 14c2 2 5 2 7 0" /></svg>
            <CloudIcon className="ml-2.5 size-4" />
            <svg viewBox="0 0 16 16" className="ml-2 size-4" fill="none" stroke="#fff" aria-hidden="true"><path d="M5.500 2.500h10v8H5.500M10.500 11v3M6 14.500h8M.5 1.500h4v4h-4zM2.500 6v5h3" /></svg>
            <svg viewBox="0 0 16 16" className="ml-2 size-4" fill="none" stroke="#fff" aria-hidden="true"><path d="M.5 5.500h3l3-3v11l-3-3h-3zM9 6c1 1 1 3 0 4M11 4c2 2 2 6 0 8M13 2c3 3 3 9 0 12" /></svg>
            <div className="ml-2.5 mr-[18px]"><Clock /></div>
            <button type="button" aria-label="Notificaciones" className="relative mr-4 h-6 w-5">
              <svg viewBox="0 0 16 16" className="size-4" fill="#fff" aria-hidden="true"><path d="M0 1h16v11H6l-3 3v-3H0z" /><path d="M3 4.500h10M3 6.500h10M3 8.500h6" stroke="#1b2840" /></svg>
              <span className={`absolute left-2 top-2 grid size-4 place-items-center rounded-full border border-[#999] bg-[#2c3036] text-[11px] font-semibold ${UI}`}>1</span>
            </button>
            <span className="mr-1 h-full w-px bg-[#6a7688]" />
          </div>
        </footer>
      </div>
    </div>
  );
}
